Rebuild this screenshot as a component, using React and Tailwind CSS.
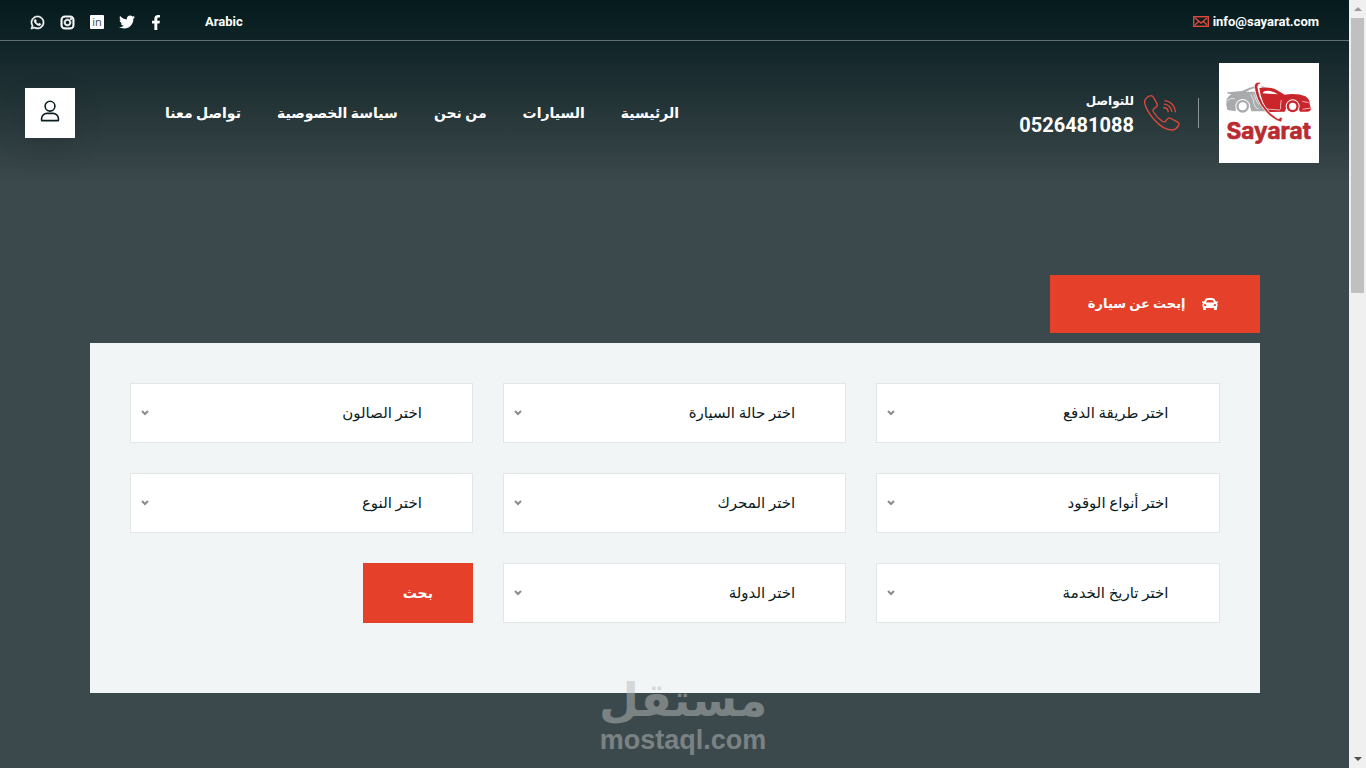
import React from 'react';
import { FaWhatsapp, FaInstagram, FaTwitter, FaFacebookF, FaCar } from 'react-icons/fa';

const navLinks = ['الرئيسية', 'السيارات', 'من نحن', 'سياسة الخصوصية', 'تواصل معنا'];

const filters = [
  { name: 'payment', label: 'اختر طريقة الدفع' },
  { name: 'condition', label: 'اختر حالة السيارة' },
  { name: 'salon', label: 'اختر الصالون' },
  { name: 'fuel', label: 'اختر أنواع الوقود' },
  { name: 'engine', label: 'اختر المحرك' },
  { name: 'type', label: 'اختر النوع' },
  { name: 'serviceDate', label: 'اختر تاريخ الخدمة' },
  { name: 'country', label: 'اختر الدولة' },
];

function LinkedinIcon() {
  return (
    <svg viewBox="0 0 14 14" className="size-3.5">
      <rect width="14" height="14" rx="1" fill="#fff" />
      <text x="7" y="11" textAnchor="middle" fontSize="11" fontWeight="400" fontFamily="Open Sans, sans-serif" fill="#3a494b">in</text>
    </svg>
  );
}

function MailIcon() {
  return (
    <svg viewBox="0 0 16 11" className="mb-0.5 h-[11px] w-4" fill="none" stroke="#e04a3c" strokeWidth="1.4">
      <rect x="0.7" y="0.7" width="14.6" height="9.6" />
      <path d="M2 2l6 5 6-5M2 9l4-4M14 9l-4-4" />
    </svg>
  );
}

function PhoneIcon() {
  return (
    <svg viewBox="0 0 110 110" className="size-9" fill="none" stroke="#dd4a3c" strokeWidth="4" strokeLinecap="round" strokeLinejoin="round">
      <path d="M5 12Q14 2 22 2Q26 2 30 9L40 27Q42 32 38 36L30 42Q26 46 29 52Q40 70 56 80Q62 84 66 80L72 73Q76 68 81 71L103 83Q109 87 106 92Q100 104 88 107Q60 108 30 74Q6 46 2 24Q1 18 5 12Z" />
      <path d="M64 17A36 36 0 0 1 96 51M62 28A25 25 0 0 1 85 50M60 39A14 14 0 0 1 74 51" />
    </svg>
  );
}

function UserIcon() {
  return (
    <svg viewBox="0 0 20 22" className="h-[22px] w-5" fill="none" stroke="#0b2023" strokeWidth="1.6" strokeLinejoin="round">
      <circle cx="10" cy="6.2" r="4.9" />
      <path d="M1.6 20.6v-2.2c0-3 2.6-5 5.4-5h6c2.8 0 5.4 2 5.4 5v2.2z" />
    </svg>
  );
}

function Logo() {
  return (
    <svg viewBox="27 9 300 300" className="size-[100px] shrink-0 bg-white" role="img" aria-label="Sayarat">
      {/* rear half */}
      <path d="M52 97L96 93Q118 82 134 79L136 83Q120 88 108 95L134 95Q140 118 152 134Q160 148 170 154L124 154A24 24 0 0 0 76 154L52 150Q47 134 50 118Q55 107 65 102L53 101Z" fill="#a9aaac" />
      <circle cx="98" cy="139" r="22" fill="#fff" />
      <circle cx="98" cy="139" r="19" fill="#a9aaac" />
      <circle cx="98" cy="139" r="12" fill="#fff" />
      <path d="M122 103Q132 118 132 132Q136 146 146 147M132 103Q137 122 146 134" fill="none" stroke="#fff" strokeWidth="2" />
      <path d="M52 122Q62 112 74 116" fill="none" stroke="#fff" strokeWidth="2" />
      <path d="M152 78Q164 80 166 84L156 83Z" fill="#a9aaac" />
      {/* front half */}
      <path d="M148 84Q182 78 204 92L224 104Q262 99 286 109Q300 118 299 132L303 146Q302 154 292 155L270 155A24 24 0 0 0 224 155L178 156Q154 130 148 84Z" fill="#c9252b" />
      <path d="M158 100Q158 92 174 92Q190 93 204 103Z" fill="#fff" />
      <path d="M206 106l5-3 4 4z" fill="#c9252b" />
      <path d="M214 120Q210 138 212 148M168 147L210 150M277 124L296 128M278 148L302 144" fill="none" stroke="#fff" strokeWidth="2" />
      <circle cx="248" cy="139" r="21" fill="#fff" />
      <circle cx="248" cy="139" r="18" fill="#c9252b" />
      <circle cx="248" cy="139" r="11" fill="#fff" />
      <path d="M151 67Q134 64 133 80Q138 122 166 153Q188 179 212 186Q218 182 216 172L209 172Q209 178 203 176Q176 160 160 133Q146 108 143 80Q144 70 151 72Z" fill="#c9252b" stroke="#fff" strokeWidth="2" />
      <text x="176" y="237" textAnchor="middle" fontSize="68" fontWeight="700" fontFamily="Inter, sans-serif" fill="#b92b30" stroke="#b92b30" strokeWidth="2" strokeLinejoin="round">Sayarat</text>
    </svg>
  );
}

function TopBar() {
  return (
    <div className="flex h-[41px] items-center justify-between border-b border-[#637072] px-[30px] text-[13px] font-bold">
      <a href="#mail" dir="ltr" className="flex items-center gap-1 pt-1">
        <MailIcon />
        info@sayarat.com
      </a>
      <div dir="ltr" className="flex items-center gap-[43px] pt-1">
        <div className="flex items-center gap-[15px]">
          <a href="#whatsapp" aria-label="WhatsApp"><FaWhatsapp className="size-[15px]" strokeWidth="20" stroke="currentColor" /></a>
          <a href="#instagram" aria-label="Instagram"><FaInstagram className="size-[15px]" strokeWidth="30" stroke="currentColor" /></a>
          <a href="#linkedin" aria-label="LinkedIn"><LinkedinIcon /></a>
          <a href="#twitter" aria-label="Twitter"><FaTwitter className="size-4" /></a>
          <a href="#facebook" aria-label="Facebook"><FaFacebookF className="h-[15px] w-3" /></a>
        </div>
        <a href="#language">Arabic</a>
      </div>
    </div>
  );
}

function Navbar() {
  return (
    <div className="flex items-center py-[22px] pr-[30px] pl-[25px]">
      <Logo />
      <div className="mr-5 h-[30px] w-px bg-[#8a9496]" />
      <div className="mr-[18px] flex items-center gap-2.5">
        <PhoneIcon />
        <div className="pt-1">
          <p className="text-xs leading-5 font-bold">للتواصل</p>
          <a href="#call" className="block text-xl leading-7 font-bold">0526481088</a>
        </div>
      </div>
      <nav className="mr-auto flex w-[514px] justify-between text-sm font-bold whitespace-nowrap">
        {navLinks.map(link => (
          <a key={link} href="#nav">{link}</a>
        ))}
      </nav>
      <button aria-label="الحساب" className="mr-[90px] flex size-[50px] items-center justify-center bg-white pb-1 shadow-[0_10px_30px_rgba(0,0,0,0.1)]">
        <UserIcon />
      </button>
    </div>
  );
}

function FilterSelect({ name, label }) {
  return (
    <div className="relative">
      <select
        name={name}
        aria-label={label}
        className="h-[60px] w-full appearance-none border border-[#e2e6e6] bg-white pr-[50px] pl-8 text-[15px] text-[#0b2023]"
      >
        <option>{label}</option>
      </select>
      <svg viewBox="0 0 8 6" className="pointer-events-none absolute top-[27px] left-[11px] h-1.5 w-2" fill="none" stroke="#8c8c8c" strokeWidth="2">
        <path d="M1 1l3 3 3-3" />
      </svg>
    </div>
  );
}

function SearchPanel() {
  return (
    <section className="mx-auto mt-[90px] max-w-[1170px]">
      <button className="flex h-[58px] w-[210px] items-center gap-4 bg-[#e5402a] pr-[42px] text-[13px] font-bold whitespace-nowrap">
        <FaCar className="size-4" />
        إبحث عن سيارة
      </button>
      <form className="mt-2.5 grid grid-cols-3 gap-[30px] bg-[#f1f5f6] px-10 pt-10 pb-[70px]">
        {filters.map(filter => (
          <FilterSelect key={filter.name} name={filter.name} label={filter.label} />
        ))}
        <button type="button" className="h-[60px] w-[110px] bg-[#e5402a] text-sm font-bold">بحث</button>
      </form>
    </section>
  );
}

function Scrollbar() {
  return (
    <div className="flex w-[17px] shrink-0 flex-col items-center justify-between bg-[#f1f0f1]">
      <div className="flex w-full flex-col items-center">
        <svg viewBox="0 0 8 4" className="my-[7px] h-1 w-2" fill="#9a9a9a"><path d="M0 4l4-4 4 4z" /></svg>
        <div className="h-[275px] w-[13px] bg-[#c1c0c1]" />
      </div>
      <svg viewBox="0 0 8 4" className="mb-[7px] h-1 w-2" fill="#505050"><path d="M0 0l4 4 4-4z" /></svg>
    </div>
  );
}

function Watermark() {
  return (
    <div dir="ltr" className="pointer-events-none absolute bottom-4 left-1/2 flex -translate-x-1/2 flex-col items-center font-bold text-[#b9bcbc] opacity-50">
      <span className="text-[46px] leading-[56px]">مستقل</span>
      <span className="font-['Liberation_Sans',sans-serif] text-[27px] leading-6">mostaql.com</span>
    </div>
  );
}

function App() {
  return (
    <div className="relative flex min-h-screen font-['Roboto','DejaVu_Sans',sans-serif]">
      <div dir="rtl" className="min-w-0 flex-1 bg-[#3c494c] text-white">
        <header className="bg-linear-to-b from-[#041a1d] to-[#3c494c]">
          <TopBar />
          <Navbar />
        </header>
        <SearchPanel />
      </div>
      <Scrollbar />
      <Watermark />
    </div>
  );
}

export default App;
